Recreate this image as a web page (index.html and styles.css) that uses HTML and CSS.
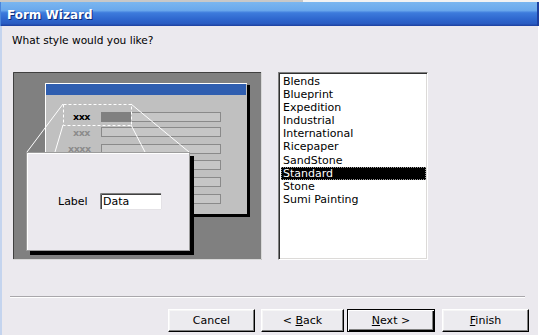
FILE: index.html
```html
<!DOCTYPE html>
<html>
<head>
<meta charset="utf-8">
<link rel="stylesheet" href="styles.css">
</head>
<body>
<div class="topstrip"></div>
<div class="titlebar"><span class="title">Form Wizard</span></div>
<div class="client">
  <p class="prompt">What style would you like?</p>
  <div class="main">
    <svg class="preview" width="249" height="188" viewBox="0 0 249 188">
      <rect width="249" height="188" fill="#808080"/>
      <path d="M0.5 188V0.5H249" stroke="#404040" fill="none"/>
      <path d="M248.5 0V187.5H0" stroke="#d8d8d8" fill="none"/>
      <rect x="35" y="13" width="202" height="132" fill="#000"/>
      <rect x="32" y="11" width="202" height="131" fill="#c0c0c0"/>
      <path d="M32.5 142V11.5H234" stroke="#fff" fill="none"/>
      <rect x="33" y="12" width="200" height="11" fill="#2f5eb0"/>
      <g fill="#c6c6c6" stroke="#8a8a8a">
        <rect x="88.5" y="40.5" width="119" height="9"/>
        <rect x="88.5" y="55.5" width="119" height="9"/>
        <rect x="88.5" y="72.5" width="119" height="9"/>
        <rect x="88.5" y="88.5" width="119" height="9"/>
        <rect x="88.5" y="105.5" width="119" height="9"/>
        <rect x="88.5" y="122.5" width="119" height="9"/>
      </g>
      <rect x="88" y="40" width="30" height="10" fill="#808080"/>
      <text class="xx" x="60" y="48" fill="#000">xxx</text>
      <text class="xx" x="60" y="64" fill="#8c8c8c">xxx</text>
      <text class="xx" x="55" y="80" fill="#8c8c8c">xxxx</text>
      <rect x="50.5" y="32.5" width="68" height="21" fill="none" stroke="#fff" stroke-dasharray="3 2"/>
      <g stroke="#fff" stroke-width="1">
        <line x1="50" y1="32" x2="14" y2="80"/>
        <line x1="50" y1="53" x2="42" y2="80"/>
        <line x1="118" y1="53" x2="132" y2="80"/>
        <line x1="118" y1="32" x2="176" y2="80"/>
      </g>
      <rect x="17" y="84" width="164" height="99" fill="#000"/>
      <rect x="13.5" y="80.5" width="163" height="98" fill="#ebe9ee" stroke="#9c9c9c"/>
      <path d="M14.5 178V81.5H176" stroke="#fff" fill="none"/>
      <text class="lbl" x="45" y="133">Label</text>
      <rect x="87" y="121" width="62" height="17" fill="#fff"/>
      <path d="M87.5 138V121.5H149" stroke="#808080" fill="none"/>
      <path d="M88.5 137V122.5H148" stroke="#404040" fill="none"/>
      <path d="M148.5 121V137.5H87" stroke="#e4e2e6" fill="none"/>
      <text class="lbl" x="90" y="133">Data</text>
    </svg>
    <ul class="listbox">
      <li>Blends</li>
      <li>Blueprint</li>
      <li>Expedition</li>
      <li>Industrial</li>
      <li>International</li>
      <li>Ricepaper</li>
      <li>SandStone</li>
      <li class="selected">Standard</li>
      <li>Stone</li>
      <li>Sumi Painting</li>
    </ul>
  </div>
  <div class="separator"></div>
  <div class="buttons">
    <button class="btn cancel">Cancel</button>
    <button class="btn back">&lt; <u>B</u>ack</button>
    <button class="btn next default"><u>N</u>ext &gt;</button>
    <button class="btn finish"><u>F</u>inish</button>
  </div>
</div>
</body>
</html>
```

FILE: styles.css
```css
html, body {
  margin: 0;
  padding: 0;
}
body {
  width: 539px;
  height: 335px;
  overflow: hidden;
  background: #ebe9ee;
  font-family: "DejaVu Sans", sans-serif;
  font-size: 11px;
  color: #000;
}
.topstrip {
  height: 2px;
  background: linear-gradient(to right, #c8c8c8 0, #c8c8c8 303px, #f2f2f2 303px);
}
.titlebar {
  height: 24px;
  box-sizing: border-box;
  display: flex;
  align-items: center;
  padding-left: 6px;
  padding-top: 1px;
  background: linear-gradient(#7ab6f0 0, #6aa8ec 35%, #3d7bdc 45%, #2f68cf 70%, #2a5cc2 90%, #1d3f9e 100%);
  border-right: 2px solid #1d3f9e;
  border-left: 1px solid #4a86dc;
}
.title {
  color: #fff;
  font-family: "DejaVu Sans", sans-serif;
  font-weight: bold;
  font-size: 12px;
  text-shadow: 1px 1px 0 #0c2a7a;
}
.client {
  height: 309px;
  box-sizing: border-box;
  border-left: 2px solid #c4d4ee;
  border-right: 1px solid #ffffff;
  padding-left: 8px;
  padding-top: 7px;
}
.prompt {
  margin: 0;
  padding-left: 2px;
  line-height: 14px;
  height: 14px;
  font-size: 10.6px;
}
.main {
  display: flex;
  margin-top: 25px;
  margin-left: 3px;
  height: 188px;
}
.preview {
  display: block;
  flex: none;
}
.xx {
  font-family: "DejaVu Sans", sans-serif;
  font-weight: bold;
  font-size: 9.5px;
  letter-spacing: -0.5px;
}
.lbl {
  font-family: "DejaVu Sans", sans-serif;
  font-size: 11px;
  fill: #000;
}
.listbox {
  list-style: none;
  margin: 0 0 0 16px;
  padding: 2px 0 0 0;
  width: 150px;
  height: 188px;
  box-sizing: border-box;
  background: #fff;
  border: 1px solid;
  border-color: #808080 #ffffff #ffffff #808080;
  box-shadow: inset 1px 1px 0 #303030, inset -1px -1px 0 #dcdad8;
}
.listbox li {
  line-height: 13px;
  height: 13.1px;
  margin: 0 1px 0 2px;
  padding-left: 2px;
  white-space: nowrap;
}
.listbox li.selected {
  background: #000;
  color: #fff;
  outline: 1px dotted #9a9a9a;
  outline-offset: -1px;
}
.separator {
  width: 515px;
  height: 1px;
  margin-top: 36px;
  background: #a9a7ab;
  border-bottom: 1px solid #ffffff;
}
.buttons {
  display: flex;
  margin-top: 11px;
  padding-left: 158px;
}
.btn {
  height: 23px;
  box-sizing: border-box;
  padding: 0;
  font-family: "DejaVu Sans", sans-serif;
  font-size: 11px;
  color: #000;
  background: #ecebef;
  border: 1px solid;
  border-color: #ffffff #000000 #000000 #ffffff;
  box-shadow: inset -1px -1px 0 #808080, inset 1px 1px 0 #f6f6f6;
}
.cancel { width: 87px; }
.back { width: 83px; margin-left: 6px; }
.next { width: 88px; margin-left: 3px; }
.finish { width: 87px; margin-left: 7px; }
.btn.default {
  border: 1px solid #000;
  box-shadow: inset 1px 1px 0 #ffffff, inset -1px -1px 0 #000000, inset -2px -2px 0 #808080;
}
.btn u {
  text-decoration: underline;
}
```
